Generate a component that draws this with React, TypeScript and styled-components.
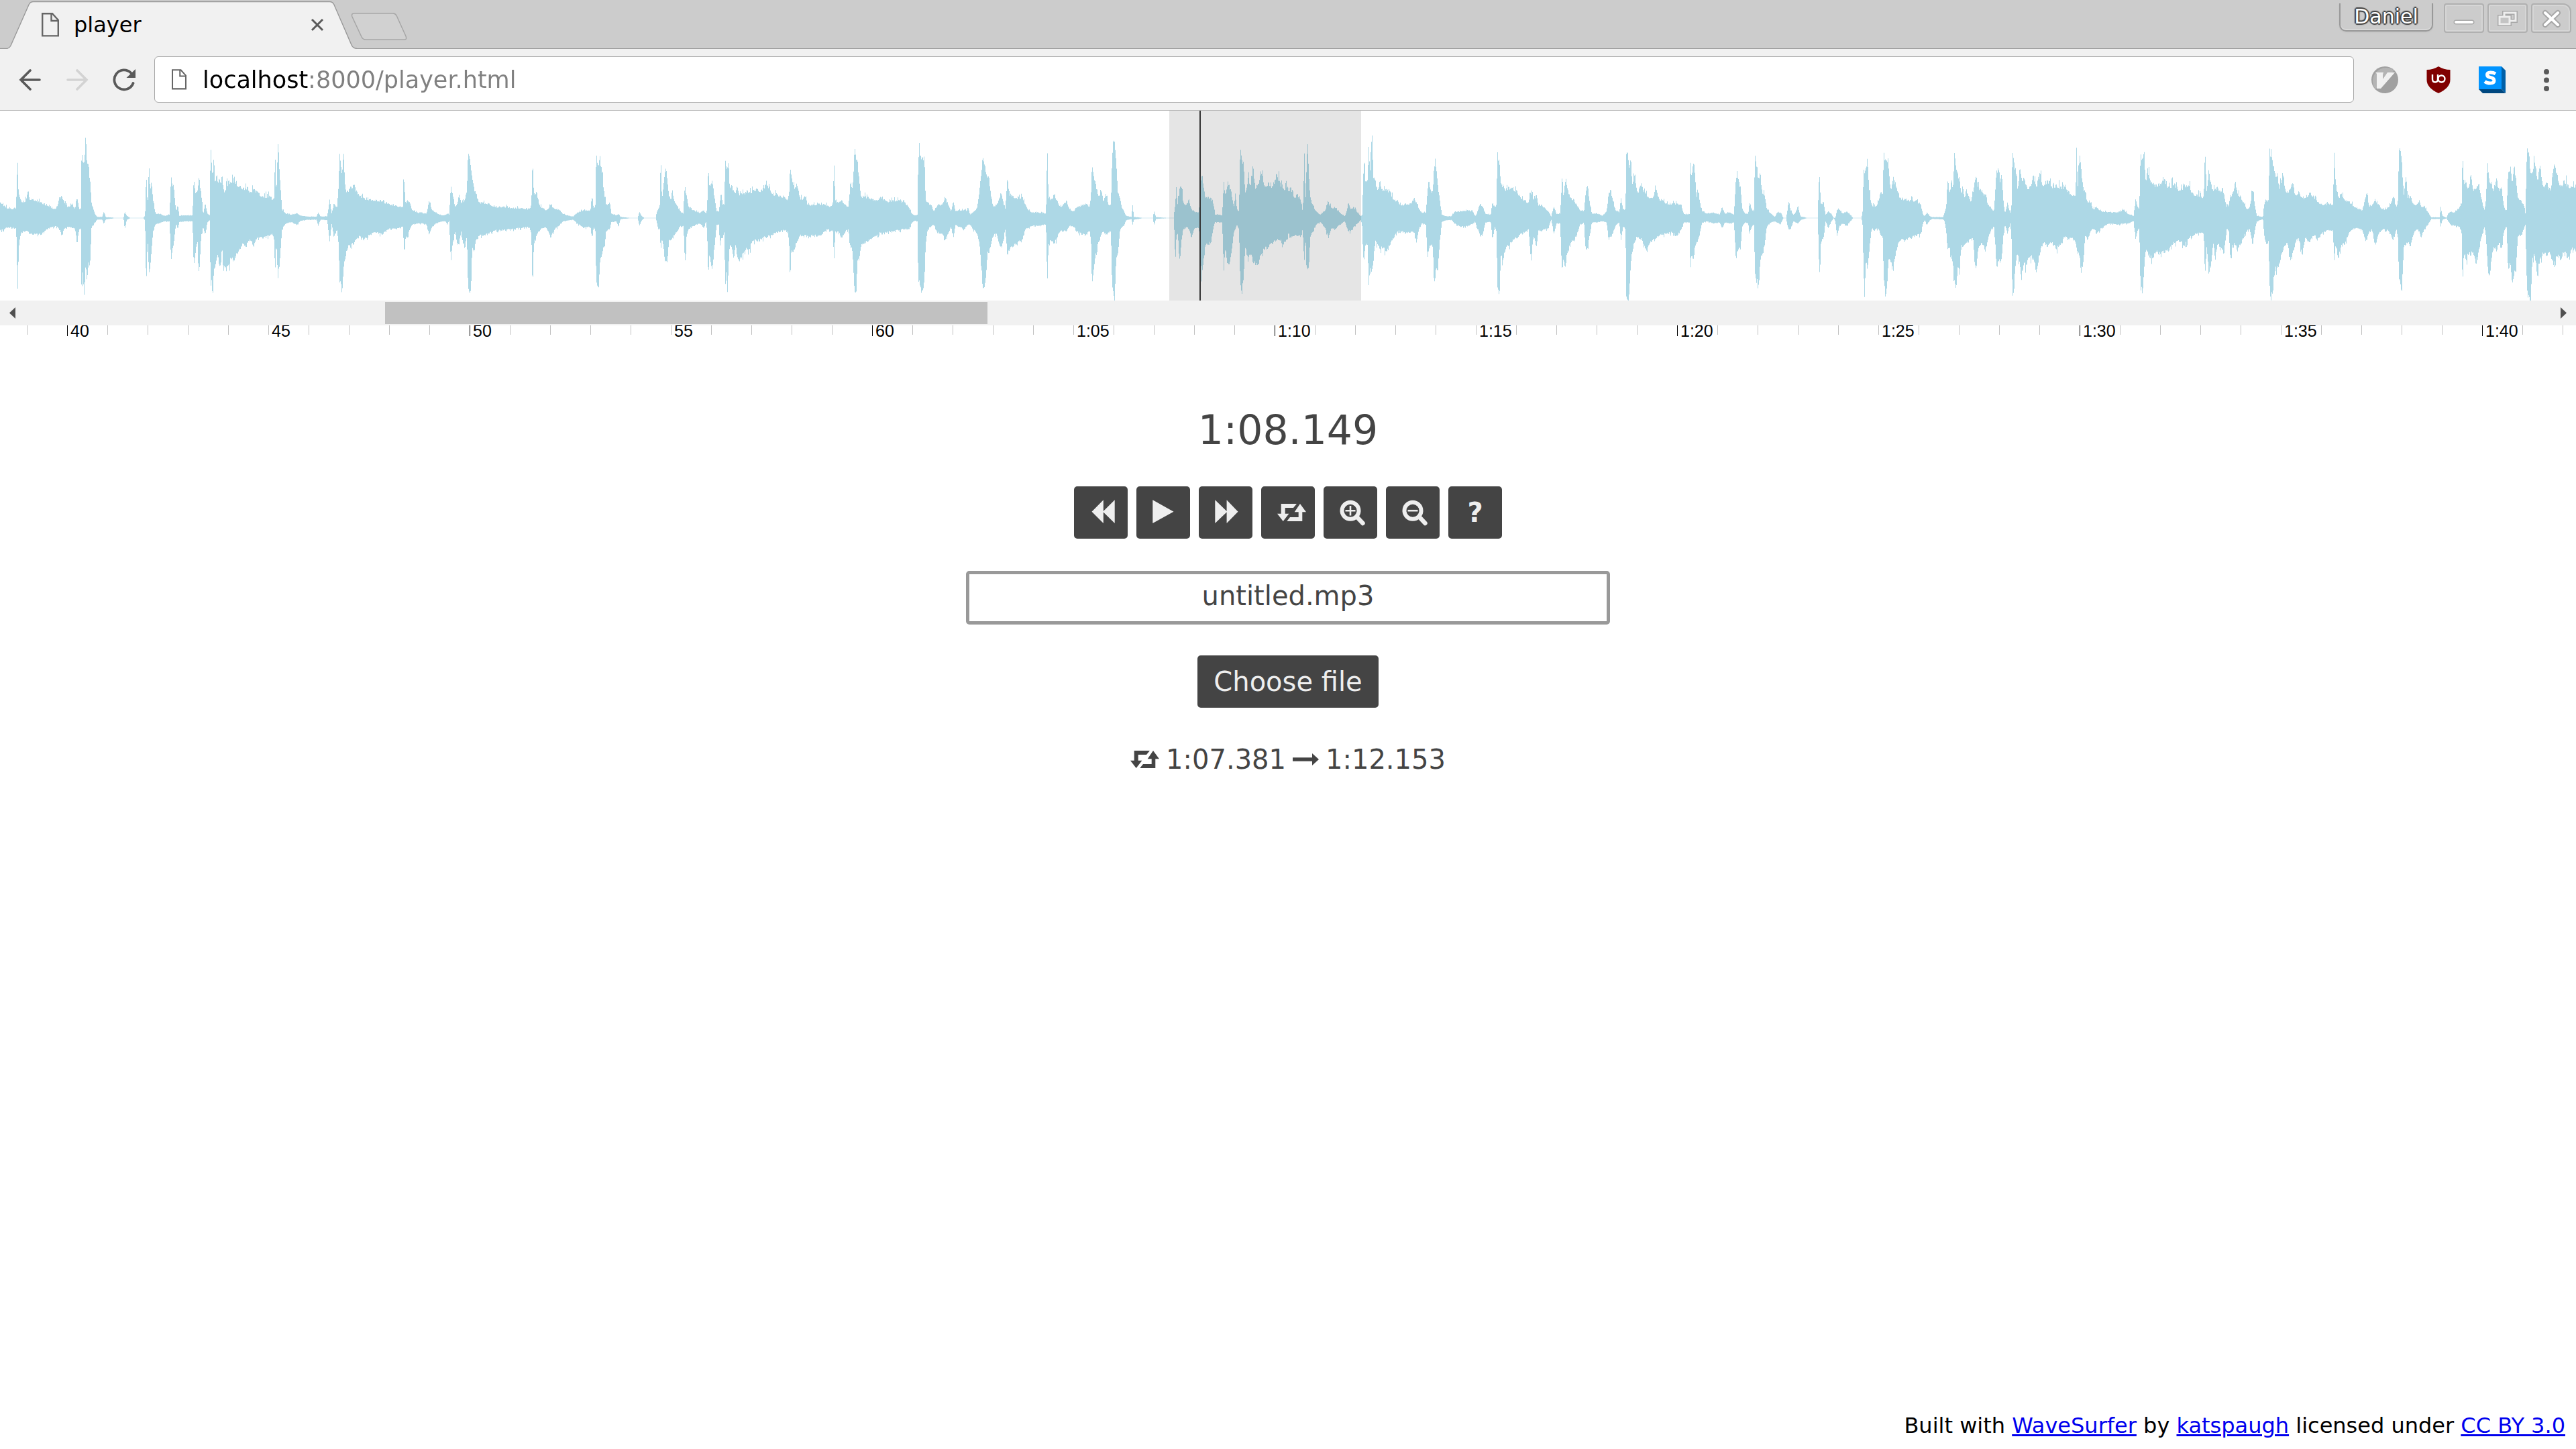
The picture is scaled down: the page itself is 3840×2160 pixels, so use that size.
import React from "react";
import styled, { createGlobalStyle } from "styled-components";

/* ---------- data ---------- */

const view = { start: 38.333, seconds: 64, duration: 268.6 };
const loop = { from: 67.381, to: 72.153 };
const position = 68.149;

/* Envelope key points, 16 seconds per block: "x,up,down".
   x runs 0-1568 inside a block, amplitudes are out of 480. */
const BLOCK = 1568;
const FULL = 480;
const envelope = [
  `0,70,55 10,55,50 20,42,42 38,42,45 40,130,110 42,282,352 44,130,200 46,100,110 50,80,70 60,70,60 68,125,60 72,80,70 80,85,75 100,70,75 115,55,50 135,40,35 146,90,55 149,100,80 155,75,50 165,50,40 175,65,45 182,40,45 187,92,120 192,40,50 196,40,50 198,305,352 201,250,240 204,245,350 208,377,200 211,245,282 215,240,200 219,160,190 222,70,45 230,20,20 236,5,7 248,5,7 252,28,26 257,4,6 275,2,2 276,0,0 300,0,0 303,28,50 308,10,8 316,1,1 317,0,0 348,0,0 352,10,10 354,60,130 355,240,350 357,110,180 359,60,100 362,248,248 365,120,220 368,165,150 372,80,60 378,20,28 385,20,25 400,10,15 412,15,15 416,190,192 419,140,140 422,150,120 426,60,50 429,30,25 432,60,50 436,10,18 450,12,15 468,12,15 471,180,215 475,110,160 480,120,100 484,188,258 489,110,80 494,15,40 499,68,75 504,20,20 510,12,10 512,335,315 515,230,270 517,180,370 520,280,230 523,150,220 527,200,180 530,150,160 533,180,215 537,150,210 540,200,120 543,130,240 548,120,220 556,170,210 563,155,180 570,185,190 577,140,160 584,145,140 592,135,115 602,140,110 610,115,100 617,130,130 625,120,90 640,95,92 655,100,80 662,80,70 667,90,100 669,310,255 672,90,100 676,337,272 680,200,210 684,90,100 686,40,50 695,20,25 710,15,18 722,22,32 730,12,14 745,7,8 770,6,7 774,25,35 780,6,7 796,8,10 802,83,105 807,20,25 812,65,85 820,50,55 824,150,120 826,295,290 829,240,280 832,190,345 836,298,220 840,130,180 845,120,140 850,130,120 860,150,120 868,120,90 876,100,80 885,90,100 900,85,75 915,82,65 930,75,75 945,65,50 965,55,50 980,50,40 982,200,100 984,140,165 987,60,80 991,80,90 997,70,50 1003,35,30 1015,25,25 1030,20,25 1038,20,30 1044,78,75 1050,40,45 1060,25,25 1075,12,15 1085,15,15 1088,20,30 1093,15,12 1097,145,200 1101,110,120 1107,50,60 1112,60,110 1117,105,120 1122,70,60 1131,80,140 1136,120,80 1139,292,310 1143,270,338 1146,220,320 1149,180,130 1153,140,150 1158,110,100 1165,70,80 1175,70,80 1190,65,70 1205,50,55 1225,52,55 1245,45,50 1270,45,45 1288,40,40 1293,60,70 1296,265,320 1299,110,120 1306,118,75 1312,60,60 1320,45,45 1330,35,45 1340,60,90 1350,40,50 1360,38,35 1370,18,15 1385,10,10 1395,7,8 1405,25,25 1420,35,45 1437,35,40 1440,95,85 1446,40,40 1449,60,60 1451,300,280 1454,240,305 1457,235,310 1460,280,200 1464,220,170 1470,120,130 1475,60,60 1484,70,50 1488,20,18 1500,12,15 1505,18,40 1510,5,5 1532,1,1 1534,0,0 1552,0,0 1556,28,35 1562,8,10 1567,2,2`,
  `0,1,1 3,0,0 28,0,0 30,25,15 34,40,50 38,60,50 40,296,150 43,80,90 47,150,130 50,200,195 53,227,190 56,170,200 60,100,100 65,80,100 68,130,90 74,70,75 80,55,60 88,30,35 95,20,35 97,100,100 99,145,210 103,100,80 108,50,50 120,35,35 135,22,25 145,35,45 150,20,15 153,40,60 155,190,222 159,140,160 163,155,215 167,150,210 172,80,110 176,30,30 182,30,30 184,70,130 187,115,90 191,60,90 195,60,60 197,265,315 200,220,220 202,220,355 205,255,220 208,130,120 213,150,130 218,120,185 222,110,120 226,145,170 230,110,190 236,110,180 243,110,150 250,125,140 256,115,140 265,125,100 275,130,105 285,125,95 295,150,85 300,145,85 310,110,75 325,105,65 340,95,55 350,85,60 353,120,130 355,230,285 358,190,140 362,150,155 366,130,140 371,155,110 378,95,80 385,80,80 391,100,75 397,60,80 410,60,80 425,65,80 440,60,60 447,55,50 453,50,60 459,70,60 462,248,190 465,80,60 472,70,60 481,80,90 490,60,60 497,50,50 502,165,130 507,130,150 510,220,260 512,322,330 516,260,335 519,260,190 523,180,190 527,100,130 535,95,115 545,95,105 555,85,90 565,80,80 575,95,65 590,75,65 605,80,60 620,80,55 635,70,50 645,45,50 652,18,20 660,12,12 665,15,15 667,270,280 672,280,305 677,270,330 682,275,280 685,80,120 690,70,50 697,60,40 705,30,30 712,50,60 718,60,70 725,60,70 732,95,100 740,60,70 747,30,40 753,70,85 758,30,30 765,35,40 780,38,50 785,30,35 788,50,30 793,15,30 800,25,50 810,45,70 817,140,130 824,275,315 828,240,310 832,200,260 836,180,150 839,190,160 844,100,120 850,50,80 858,60,70 863,80,110 868,115,130 873,80,110 879,40,50 884,180,170 890,100,140 897,100,130 905,90,120 915,85,105 921,95,95 928,60,50 935,35,45 945,25,35 960,25,35 977,20,30 979,80,80 981,343,310 984,90,120 990,80,100 997,105,115 1005,80,90 1012,50,60 1020,60,60 1028,80,60 1035,40,35 1045,30,40 1055,50,60 1065,55,75 1075,65,75 1085,50,60 1088,120,120 1090,240,300 1094,190,235 1099,155,160 1105,100,110 1109,100,100 1113,125,70 1118,70,60 1124,110,75 1130,60,65 1136,60,60 1139,260,300 1142,350,330 1145,340,370 1149,250,180 1153,115,160 1158,90,60 1163,45,40 1168,30,35 1173,10,10 1186,5,5 1189,58,30 1192,5,8 1212,1,1 1214,0,0 1238,0,0 1241,30,30 1246,4,4 1270,1,1 1273,0,0 1289,0,0 1291,40,80 1293,60,205 1295,145,100 1298,55,60 1304,140,195 1308,140,100 1312,70,50 1320,60,40 1326,85,50 1332,40,90 1340,28,45 1350,25,45 1354,140,120 1357,190,290 1361,150,200 1366,90,120 1373,95,120 1380,90,110 1386,60,40 1390,15,18 1400,15,20 1407,12,20 1411,165,240 1415,100,130 1419,140,200 1424,150,210 1429,120,160 1436,50,60 1439,110,50 1443,40,30 1448,30,50 1451,320,285 1455,260,345 1459,250,270 1463,110,130 1470,180,195 1476,140,160 1482,240,200 1488,130,210 1494,150,210 1503,200,160 1510,140,140 1520,160,130 1530,140,115 1539,200,100 1548,160,100 1556,130,120 1567,140,95`,
  `0,120,70 6,140,90 14,90,80 22,110,80 30,80,85 35,30,50 37,110,130 39,305,195 42,60,80 44,200,210 47,350,230 50,190,220 54,90,80 60,55,60 68,30,30 78,15,18 90,35,45 98,72,90 105,45,45 115,45,50 125,25,30 138,8,15 142,30,40 146,70,60 152,40,58 159,50,40 168,25,25 177,8,8 180,15,40 182,150,160 184,255,195 188,160,120 193,170,120 196,318,300 199,200,220 201,300,250 204,380,230 207,180,200 212,170,100 218,120,120 223,170,140 230,120,135 238,130,150 248,120,120 257,80,90 266,80,60 275,55,60 285,65,70 297,65,65 307,90,65 312,70,110 318,40,50 325,25,25 335,25,30 339,120,185 342,172,140 347,120,120 352,120,130 355,232,300 360,228,220 364,150,240 369,80,100 374,15,18 385,8,10 397,8,8 405,28,25 420,30,40 440,35,35 450,28,25 455,8,15 459,20,45 464,50,60 468,65,85 474,50,70 480,20,20 493,15,18 497,70,95 503,50,40 507,60,60 509,300,305 514,250,350 518,150,160 523,150,190 529,120,140 536,140,125 543,135,110 550,120,95 556,125,90 563,100,75 575,80,65 585,70,50 591,125,195 597,80,80 604,105,130 609,55,55 617,60,60 625,45,50 633,30,50 640,6,6 647,50,70 653,18,25 662,20,25 665,120,180 667,200,240 670,90,180 674,165,225 680,130,150 688,90,110 695,85,100 702,60,80 710,35,30 720,30,20 724,110,140 728,150,140 733,80,85 739,20,20 750,22,20 765,10,15 775,30,20 780,110,100 785,130,80 790,80,70 797,35,35 806,25,20 810,90,100 815,40,40 821,40,50 823,285,350 826,300,370 830,220,340 834,270,200 838,150,150 844,200,100 850,110,85 857,145,95 862,140,100 870,110,140 878,90,120 885,90,105 896,130,90 903,85,80 912,80,75 920,65,70 935,65,65 947,65,80 957,60,50 963,18,20 977,18,20 979,280,250 982,180,160 986,250,190 990,200,130 994,90,110 999,120,90 1004,50,50 1008,30,20 1020,20,15 1035,25,25 1050,15,20 1056,50,45 1063,20,20 1075,25,25 1085,15,20 1087,80,80 1090,180,190 1095,180,140 1101,140,140 1105,45,40 1112,20,20 1120,20,25 1123,70,75 1128,40,40 1134,30,30 1136,290,240 1140,230,290 1146,170,300 1149,210,190 1154,110,165 1160,100,120 1165,40,40 1175,20,20 1185,5,15 1190,25,20 1198,25,30 1205,2,2 1207,0,0 1212,0,0 1215,30,30 1218,75,50 1223,35,50 1230,15,15 1235,25,20 1241,55,25 1247,8,10 1260,2,2 1262,0,0 1289,0,0 1291,120,110 1293,205,265 1297,60,110 1303,75,90 1308,15,15 1315,30,45 1322,20,15 1328,1,1 1332,1,15 1336,35,80 1342,38,35 1350,20,25 1360,30,35 1368,15,15 1375,1,1 1377,0,0 1395,0,0 1398,20,20 1401,220,250 1403,200,355 1406,220,200 1410,270,230 1414,130,160 1420,60,50 1430,50,50 1438,80,50 1443,120,80 1447,100,80 1450,295,270 1454,260,358 1458,255,300 1462,220,180 1466,130,190 1470,150,230 1477,170,180 1483,120,130 1490,90,100 1502,85,100 1515,80,90 1530,80,80 1540,60,70 1546,12,20 1550,10,10 1555,25,30 1562,8,10 1567,5,5`,
  `0,4,4 26,4,6 30,25,15 34,50,60 37,170,140 42,110,130 47,175,180 50,120,200 54,295,280 58,220,320 62,200,220 66,180,260 70,110,120 74,145,130 78,90,120 83,130,110 88,100,110 94,70,90 100,120,100 103,160,200 107,190,230 111,140,150 117,130,120 124,110,120 129,105,150 135,60,100 142,50,60 150,30,35 154,140,130 156,210,220 161,225,190 165,160,200 169,200,180 173,80,80 177,20,30 183,70,70 190,20,20 193,60,100 195,305,355 199,250,325 203,220,200 208,120,160 213,230,200 217,180,280 223,180,200 230,140,210 238,140,170 246,195,180 253,140,245 262,205,160 270,140,110 280,170,130 290,140,110 302,150,140 312,140,120 322,140,85 332,120,95 345,100,95 349,100,110 351,325,130 354,130,160 359,285,170 362,230,250 367,140,210 372,120,80 378,70,100 385,70,60 392,40,50 402,45,65 412,30,45 430,27,25 450,25,30 467,38,25 475,20,25 490,10,15 495,85,95 500,50,55 504,40,45 507,290,320 512,260,340 516,300,220 520,150,140 524,225,150 530,170,180 537,150,180 545,150,150 552,155,165 566,175,155 575,140,150 590,155,110 603,120,105 614,150,125 625,145,90 635,110,80 645,105,70 661,95,70 664,310,260 668,120,130 673,215,250 678,160,220 684,120,110 689,130,190 694,140,120 703,120,130 710,110,165 717,50,50 722,60,60 726,100,190 731,110,120 738,165,120 743,110,150 750,100,120 758,70,90 765,40,60 773,50,50 780,130,125 785,60,60 790,10,15 805,5,5 809,70,90 814,80,120 819,80,100 821,315,300 828,260,340 834,200,240 840,200,220 846,130,200 853,205,150 860,120,120 866,110,120 872,130,190 878,160,150 884,100,110 892,120,90 901,90,170 908,90,90 919,115,110 928,100,80 940,70,90 955,60,60 970,65,55 976,60,60 978,305,195 982,160,120 989,90,185 996,110,120 1004,80,120 1012,75,80 1020,65,55 1032,45,45 1047,35,55 1053,80,90 1058,115,100 1064,50,60 1070,55,50 1078,85,110 1087,60,70 1097,38,50 1110,45,55 1122,95,100 1130,50,50 1134,80,90 1136,300,270 1139,315,280 1143,260,340 1148,100,130 1153,185,120 1158,90,110 1164,100,130 1172,60,70 1180,60,50 1186,80,60 1190,50,90 1198,55,50 1207,25,30 1215,3,4 1235,3,4 1238,50,38 1242,10,8 1252,1,1 1256,20,15 1262,28,30 1272,25,35 1284,50,40 1289,65,70 1291,305,310 1294,150,160 1300,160,190 1306,130,160 1311,200,170 1316,130,150 1324,130,210 1331,155,140 1338,80,80 1344,35,40 1348,80,80 1352,255,210 1355,180,265 1361,160,190 1367,120,130 1374,180,150 1380,120,110 1386,140,140 1392,50,60 1398,30,35 1402,200,230 1408,230,210 1412,150,295 1416,225,260 1421,180,240 1426,90,80 1433,80,80 1440,60,50 1444,20,30 1448,315,320 1453,290,350 1457,200,370 1461,200,180 1467,250,170 1473,170,260 1480,235,180 1488,140,160 1496,160,170 1505,120,160 1514,240,220 1521,200,170 1530,140,190 1538,170,150 1547,150,180 1556,140,140 1567,150,150`,
];

const WAVE_W = 3840;
const WAVE_H = 320;

function buildWavePath(): string {
  const pts = envelope.flatMap((block, b) =>
    block.split(" ").map((p) => {
      const [x, up, down] = p.split(",").map(Number);
      return [((b * BLOCK + x) * WAVE_W) / (BLOCK * envelope.length), up, down];
    })
  );
  let seed = 7;
  const rand = () => {
    seed = (seed * 1103515245 + 12345) % 2147483648;
    return seed / 2147483648;
  };
  const mid = WAVE_H / 2;
  let i = 0;
  let top = "";
  let bottom = "";
  for (let x = 0; x < WAVE_W; x++) {
    while (i < pts.length - 2 && pts[i + 1][0] < x) i++;
    const [x0, u0, d0] = pts[i];
    const [x1, u1, d1] = pts[i + 1];
    const t = Math.min(1, Math.max(0, (x - x0) / (x1 - x0)));
    const near = Math.abs(x - x0) < 1 || Math.abs(x - x1) < 1;
    const ju = near ? 1 : 0.92 + rand() ** 3 * 0.3;
    const jd = near ? 1 : 0.93 + rand() ** 3 * 0.26;
    const up = Math.max(0.3, ((u0 + (u1 - u0) * t) * ju * mid) / FULL);
    const down = Math.max(0.3, ((d0 + (d1 - d0) * t) * jd * mid) / FULL);
    top += `V${(mid - up).toFixed(1)}H${x + 1}`;
    bottom = `V${(mid + down).toFixed(1)}H${x}` + bottom;
  }
  return `M0 ${mid}${top}${bottom}Z`;
}

const wavePath = buildWavePath();

const clock = (s: number) =>
  s > 60 ? `${Math.floor(s / 60)}:${String(s % 60).padStart(2, "0")}` : String(s);
const clockMs = (s: number) =>
  `${Math.floor(s / 60)}:${(s % 60).toFixed(3).padStart(6, "0")}`;
const percent = (s: number, whole: number) => `${(s / whole) * 100}%`;
const seconds = Array.from({ length: 64 }, (_, i) => 39 + i);

/* ---------- styles ---------- */

const GlobalStyle = createGlobalStyle`
  * { box-sizing: border-box; }
  body { margin: 0; background: #fff; }
  button, input { font: inherit; color: inherit; margin: 0; padding: 0; border: 0; background: none; }
  button { cursor: pointer; }
  svg { display: block; }
`;

const Page = styled.div`
  min-height: 100vh;
  display: flex;
  flex-direction: column;
  font-family: "DejaVu Sans", sans-serif;
  font-size: 40px;
  color: #444;
`;

const TabStrip = styled.header`
  height: 73px;
  display: flex;
  align-items: flex-start;
  background: #ccc;
  box-shadow: inset 0 -1px #999;
  padding-right: 7px;
`;

const Tab = styled.div`
  position: relative;
  width: 532px;
  height: 73px;
  padding: 0 49px 0 62px;
  display: flex;
  align-items: center;
  gap: 22px;
  font-size: 32px;
  color: #000;
`;

const TabShape = styled.svg`
  position: absolute;
  inset: 0;
`;

const TabTitle = styled.span`
  position: relative;
  flex: 1;
`;

const Layered = styled.span`
  position: relative;
`;

const TabClose = styled.button`
  position: relative;
`;

const NewTab = styled.button`
  margin: 19px auto 0 -9px;
  position: relative;
`;

const UserButton = styled.button`
  width: 140px;
  height: 42px;
  margin: 5px 16px 0 0;
  border: 2px solid #999;
  border-top: 0;
  border-radius: 0 0 10px 10px;
  box-shadow: inset 0 -2px #d8d8d8, 0 1px 2px #bbb;
  font-size: 30px;
  line-height: 40px;
  color: #fff;
  text-shadow: 0 0 1px #333, 2px 0 1px #444, -2px 0 1px #444, 0 2px 1px #444,
    0 -2px 1px #444, 1px 1px 2px #333, -1px -1px 2px #333;
`;

const WindowButtons = styled.div`
  display: flex;
  gap: 5px;
  margin-top: 5px;
`;

const WindowButton = styled.button`
  width: 60px;
  height: 44px;
  border: 2px solid #b0b0b0;
  border-radius: 4px;
  box-shadow: inset 0 0 0 2px #d6d6d6;
  &:last-child {
    border-top-right-radius: 12px;
  }
`;

const Toolbar = styled.nav`
  height: 92px;
  display: flex;
  align-items: center;
  background: #f1f1f1;
  border-bottom: 1px solid #b4b4b4;
  padding: 0 25px 0 28px;
`;

const NavButtons = styled.div`
  display: flex;
  align-items: center;
  gap: 36px;
  margin-right: 28px;
`;

const Omnibox = styled.label`
  flex: 1;
  height: 69px;
  display: flex;
  align-items: center;
  gap: 24px;
  padding: 0 25px;
  background: #fff;
  border: 1px solid #a6a6a6;
  border-radius: 6px;
`;

const Address = styled.input`
  flex: 1;
  height: 60px;
  outline: 0;
  font-size: 35px;
  color: #000;
  background: linear-gradient(to right, #000 158px, #808080 158px);
  background-clip: text;
  -webkit-background-clip: text;
  -webkit-text-fill-color: transparent;
`;

const Extensions = styled.div`
  display: flex;
  align-items: center;
  gap: 40px;
  margin-left: 26px;
`;

const Stage = styled.section`
  position: relative;
  height: 283px;
  overflow: hidden;
`;

const Wave = styled.svg`
  width: 100%;
  height: 320px;
`;

const LoopRegion = styled.div`
  position: absolute;
  top: 0;
  bottom: 0;
  background: rgba(0, 0, 0, 0.1);
`;

const Cursor = styled.div`
  position: absolute;
  top: 0;
  bottom: 0;
  width: 2px;
  margin-left: -1px;
  background: #333;
`;

const ScrollBar = styled.div`
  position: relative;
  z-index: 1;
  height: 37px;
  display: flex;
  align-items: center;
  background: #f1f1f1;
`;

const ScrollArrow = styled.button`
  width: 37px;
  height: 37px;
  display: grid;
  place-items: center;
`;

const ScrollTrack = styled.div`
  flex: 1;
`;

const ScrollThumb = styled.div`
  height: 33px;
  background: #c1c1c1;
`;

const Timeline = styled.div`
  display: flex;
  height: 40px;
  padding-left: 40px;
  overflow-x: clip;
  overflow-y: visible;
  font-family: "Liberation Sans", Arial, sans-serif;
  font-size: 25px;
  line-height: 16px;
  color: #000;
`;

const Tick = styled.div<{ $major: boolean }>`
  flex: none;
  width: 60px;
  height: ${(p) => (p.$major ? 16 : 14)}px;
  padding-left: 4px;
  border-left: 1px solid ${(p) => (p.$major ? "#000" : "#c0c0c0")};
`;

const Controls = styled.main`
  display: flex;
  flex-direction: column;
  align-items: center;
  gap: 46px;
  padding-top: 78px;
`;

const Time = styled.div`
  font-size: 60px;
  line-height: 76px;
`;

const ButtonRow = styled.div`
  display: flex;
  gap: 13px;
  padding-bottom: 2px;
`;

const DarkButton = styled.button`
  min-width: 80px;
  height: 78px;
  border-radius: 5px;
  background: #444;
  color: #eee;
`;

const SymbolButton = styled(DarkButton)`
  font-weight: bold;
`;

const FileButton = styled(DarkButton)`
  padding: 0 24px;
`;

const FileName = styled.input`
  width: 25%;
  height: 80px;
  padding-bottom: 6px;
  border: 5px solid #999;
  border-radius: 5px;
  background: #fff;
  text-align: center;
`;

const LoopInfo = styled.div`
  display: flex;
  align-items: center;
  gap: 10px;
  line-height: 62px;
`;

const Footer = styled.footer`
  margin-top: auto;
  padding: 0 16px 16px;
  text-align: right;
  font-size: 32px;
  color: #000;
`;

const Link = styled.a`
  color: #0000ee;
  text-decoration: underline;
`;

/* ---------- icons ---------- */

const PageIcon = ({ width, height }: { width: number; height: number }) => (
  <svg width={width} height={height} viewBox="0 0 26 36" fill="none" stroke="#666" strokeWidth="2.4">
    <path d="M1.2 1.2H16L24.8 11V34.4H1.2Z" />
    <path d="M14.5 1.5V12H24.5" />
  </svg>
);

const RetweetIcon = () => (
  <g fill="currentColor">
    <path d="M5.7 0H29L24 6H11.7V14.7H17.4L8.7 26L0 14.7H5.7Z" />
    <path d="M34 0L43 12.3H37.3V26H14.3L19 20H31.7V12.3H25.7Z" />
  </g>
);

const ButtonIcon = ({ children }: { children: React.ReactNode }) => (
  <svg width="80" height="78" viewBox="0 0 80 78" fill="currentColor" aria-hidden="true">
    {children}
  </svg>
);

const Magnifier = ({ plus }: { plus?: boolean }) => (
  <g fill="none" stroke="currentColor">
    <circle cx="40" cy="36.2" r="12.5" strokeWidth="6" />
    <path d="M51 47L58.5 55" strokeWidth="6.4" strokeLinecap="round" />
    <path d={plus ? "M32.5 36.2H47.5M40 29V43.4" : "M32.5 36.2H47.5"} strokeWidth="2.6" />
  </g>
);

/* ---------- page ---------- */

export default function App() {
  return (
    <Page>
      <GlobalStyle />
      <TabStrip>
        <Tab>
          <TabShape width="532" height="73" viewBox="0 0 532 73" aria-hidden="true">
            <path
              d="M0 72.5H10Q14 72 16 68L43 7Q45 2.5 50 2.5H491Q496 2.5 498 7L524 67Q526 72 532 72.5V73H0Z"
              fill="#f1f1f1"
            />
            <path
              d="M0 72.5H10Q14 72 16 68L43 7Q45 2.5 50 2.5H491Q496 2.5 498 7L524 67Q526 72 532 72.5"
              fill="none"
              stroke="#999"
              strokeWidth="1.4"
            />
          </TabShape>
          <Layered>
            <PageIcon width={26} height={36} />
          </Layered>
          <TabTitle>player</TabTitle>
          <TabClose aria-label="Close tab">
            <svg width="20" height="20" viewBox="0 0 20 20" stroke="#5a5a5a" strokeWidth="3">
              <path d="M2 2L18 18M18 2L2 18" />
            </svg>
          </TabClose>
        </Tab>
        <NewTab aria-label="New tab">
          <svg width="84" height="42" viewBox="0 0 84 42" fill="#d1d1d1" stroke="#a6a6a6" strokeWidth="1.5">
            <path d="M5 1H63Q66 1 68 4L82 35Q84 40 80 40H22Q18 40 16 36L2 6Q0 1 5 1Z" />
          </svg>
        </NewTab>
        <UserButton>Daniel</UserButton>
        <WindowButtons>
          <WindowButton aria-label="Minimize">
            <svg width="56" height="40" viewBox="0 0 56 40" fill="none" strokeLinecap="round">
              <path d="M16 26H40" stroke="#a8a8a8" strokeWidth="7" />
              <path d="M16 26H40" stroke="#fff" strokeWidth="4" />
            </svg>
          </WindowButton>
          <WindowButton aria-label="Restore">
            <svg width="56" height="40" viewBox="0 0 56 40" fill="none">
              <g stroke="#a8a8a8" strokeWidth="6">
                <rect x="23" y="12" width="17" height="12" />
                <rect x="16" y="18" width="15" height="11" />
              </g>
              <rect x="23" y="12" width="17" height="12" stroke="#eee" strokeWidth="3" />
              <rect x="16" y="18" width="15" height="11" fill="#c4c4c4" stroke="#eee" strokeWidth="3" />
            </svg>
          </WindowButton>
          <WindowButton aria-label="Close">
            <svg width="56" height="40" viewBox="0 0 56 40" fill="none" strokeLinecap="round">
              <path d="M19 12L38 30M38 12L19 30" stroke="#a8a8a8" strokeWidth="8" />
              <path d="M19 12L38 30M38 12L19 30" stroke="#fff" strokeWidth="4" />
            </svg>
          </WindowButton>
        </WindowButtons>
      </TabStrip>

      <Toolbar>
        <NavButtons>
          <button aria-label="Back">
            <svg width="34" height="32" viewBox="0 0 34 32" fill="none" stroke="#5a5a5a" strokeWidth="3.6" strokeLinecap="round">
              <path d="M31 16H3M17 2L3 16L17 30" />
            </svg>
          </button>
          <button aria-label="Forward">
            <svg width="34" height="32" viewBox="0 0 34 32" fill="none" stroke="#d3d3d3" strokeWidth="3.6" strokeLinecap="round">
              <path d="M3 16H31M17 2L31 16L17 30" />
            </svg>
          </button>
          <button aria-label="Reload">
            <svg width="34" height="34" viewBox="0 0 34 34">
              <path d="M30.5 22A14.5 14.5 0 1 1 27 6.500" fill="none" stroke="#5a5a5a" strokeWidth="3.8" strokeLinecap="round" />
              <path d="M34 1V14H20.5Z" fill="#5a5a5a" />
            </svg>
          </button>
        </NavButtons>
        <Omnibox>
          <PageIcon width={22} height={31} />
          <Address aria-label="Address" type="text" defaultValue="localhost:8000/player.html" />
        </Omnibox>
        <Extensions>
          <button aria-label="Vimium">
            <svg width="40" height="40" viewBox="0 0 40 40">
              <circle cx="20" cy="20" r="20" fill="#a0a0a0" />
              <path d="M6 34A20 20 0 0 1 34 6Z" fill="#b4b4b4" />
              <path d="M6 9H18L17 12V19L24 9H35L14 33H8V11Z" fill="#f1f1f1" />
            </svg>
          </button>
          <button aria-label="uBlock Origin">
            <svg width="40" height="40" viewBox="0 0 40 40">
              <path d="M20 0Q28 5 37.5 5V20Q37.5 32 20 40Q2.5 32 2.5 20V5Q12 5 20 0Z" fill="#800000" />
              <g fill="none" stroke="#fff" strokeWidth="2.4">
                <path d="M11 12V19Q11 23.5 15 23.5Q19 23.5 19 19V12" />
                <circle cx="24.5" cy="18.5" r="5" />
              </g>
            </svg>
          </button>
          <button aria-label="Stylus">
            <svg width="40" height="40" viewBox="0 0 40 40">
              <path d="M34 0L40 6V40L34 34Z" fill="#0060a8" />
              <path d="M0 34L6 40H40L34 34Z" fill="#004880" />
              <rect width="34" height="34" fill="#0094ff" />
              <path
                d="M25 11Q22 9 17.500 9Q12.500 9 12.500 12.500Q12.500 15.500 17.500 16.500Q23 17.500 23 21Q23 25 17 25Q12 25 9 22.500"
                fill="none"
                stroke="#fff"
                strokeWidth="5"
              />
            </svg>
          </button>
          <button aria-label="Menu">
            <svg width="40" height="40" viewBox="0 0 40 40" fill="#5a5a5a">
              <circle cx="21" cy="8" r="4" />
              <circle cx="21" cy="20.5" r="4" />
              <circle cx="21" cy="33" r="4" />
            </svg>
          </button>
        </Extensions>
      </Toolbar>

      <Stage aria-label="Waveform">
        <Wave viewBox={`0 0 ${WAVE_W} ${WAVE_H}`} preserveAspectRatio="none">
          <path d={wavePath} fill="#add8e6" />
        </Wave>
        <LoopRegion
          style={{
            left: percent(loop.from - view.start, view.seconds),
            width: percent(loop.to - loop.from, view.seconds),
          }}
        />
        <Cursor style={{ left: percent(position - view.start, view.seconds) }} />
      </Stage>
      <ScrollBar>
        <ScrollArrow aria-label="Scroll left">
          <svg width="9" height="17" viewBox="0 0 9 17" fill="#505050">
            <path d="M9 0V17L0 8.5Z" />
          </svg>
        </ScrollArrow>
        <ScrollTrack>
          <ScrollThumb
            style={{
              marginLeft: percent(view.start, view.duration),
              width: percent(view.seconds, view.duration),
            }}
          />
        </ScrollTrack>
        <ScrollArrow aria-label="Scroll right">
          <svg width="9" height="17" viewBox="0 0 9 17" fill="#505050">
            <path d="M0 0V17L9 8.5Z" />
          </svg>
        </ScrollArrow>
      </ScrollBar>
      <Timeline>
        {seconds.map((s) => (
          <Tick key={s} $major={s % 10 === 0}>
            {s % 5 === 0 ? clock(s) : null}
          </Tick>
        ))}
      </Timeline>

      <Controls>
        <Time>{clockMs(position)}</Time>
        <ButtonRow>
          <DarkButton aria-label="Rewind">
            <ButtonIcon>
              <path d="M26.5 37.7L43.8 20.3V37L60.7 20.3V55L43.8 38.4V55Z" />
            </ButtonIcon>
          </DarkButton>
          <DarkButton aria-label="Play">
            <ButtonIcon>
              <path d="M24.3 20.3V55L55.5 37.7Z" />
            </ButtonIcon>
          </DarkButton>
          <DarkButton aria-label="Forward">
            <ButtonIcon>
              <path d="M58.5 37.7L41.6 20.3V37L24.3 20.3V55L41.6 38.4V55Z" />
            </ButtonIcon>
          </DarkButton>
          <DarkButton aria-label="Loop">
            <ButtonIcon>
              <g transform="translate(24 26)">
                <RetweetIcon />
              </g>
            </ButtonIcon>
          </DarkButton>
          <DarkButton aria-label="Zoom in">
            <ButtonIcon>
              <Magnifier plus />
            </ButtonIcon>
          </DarkButton>
          <DarkButton aria-label="Zoom out">
            <ButtonIcon>
              <Magnifier />
            </ButtonIcon>
          </DarkButton>
          <SymbolButton aria-label="Help">?</SymbolButton>
        </ButtonRow>
        <FileName aria-label="File name" type="text" defaultValue="untitled.mp3" />
        <FileButton>Choose file</FileButton>
        <LoopInfo>
          <svg width="43" height="26" viewBox="0 0 43 26" aria-hidden="true">
            <RetweetIcon />
          </svg>
          <span>{clockMs(loop.from)}</span>
          <svg width="39" height="18" viewBox="0 0 39 18" fill="currentColor" aria-hidden="true">
            <path d="M0 6.2H29V0L39 9L29 18V11.8H0Z" />
          </svg>
          <span>{clockMs(loop.to)}</span>
        </LoopInfo>
      </Controls>

      <Footer>
        Built with <Link href="#wavesurfer">WaveSurfer</Link> by{" "}
        <Link href="#katspaugh">katspaugh</Link> licensed under{" "}
        <Link href="#license">CC BY 3.0</Link>
      </Footer>
    </Page>
  );
}
